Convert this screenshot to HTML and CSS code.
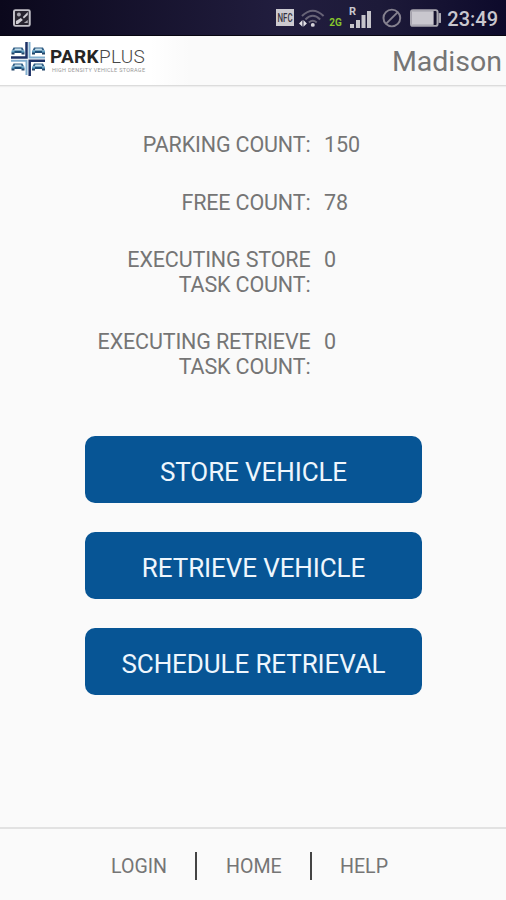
FILE: index.html
```html
<!DOCTYPE html>
<html lang="en">
<head>
<meta charset="utf-8">
<title>ParkPlus</title>
<link rel="stylesheet" href="styles.css">
</head>
<body>
<div class="status">
  <svg class="shot" width="18" height="18" viewBox="0 0 18 18"><rect x="1" y="1" width="16" height="16" rx="1.5" fill="#28242f" stroke="#c3c1c8" stroke-width="2"/><circle cx="6" cy="5.500" r="2" fill="#aaa8b0"/><path d="M3 15V12L8 9L10 11L5 15zM10 8L15 3V6L11 9.500z" fill="#d0ced4"/><path d="M11 14h4v-3z" fill="#aaa8b0"/></svg>
  <span class="nfc"><svg width="18" height="17" viewBox="0 0 18 17"><rect width="18" height="17" fill="#cccad0"/><text x="1.500" y="13" textLength="15" lengthAdjust="spacingAndGlyphs">NFC</text></svg></span>
  <svg class="wifi" width="27" height="20" viewBox="0 0 27 20"><g fill="none" stroke="#686477" stroke-width="2"><path d="M3 8Q14 -3 25 8"/><path d="M6.500 11.500Q14 4 21.500 11.500"/><path d="M10 14.500Q14 11 18 14.500"/></g><circle cx="14" cy="17" r="2" fill="#d5d3da"/><path d="M0 15.500L3.500 12v7zM8 15.500L4.500 12v7z" fill="#e3e1e7"/></svg>
  <span class="net">2G</span>
  <span class="signal"><svg width="23" height="22" viewBox="0 0 23 22"><path d="M1 17h4v4H1zM7 13h4v8H7zM12.500 8h4v13h-4zM18 4h4v17h-4z" fill="#c6c4cb"/></svg><b>R</b></span>
  <svg class="block" width="20" height="20" viewBox="0 0 20 20"><circle cx="10" cy="10" r="8.500" fill="none" stroke="#85818f" stroke-width="2"/><path d="M4 16L16 4" stroke="#85818f" stroke-width="2"/></svg>
  <svg class="battery" width="32" height="18" viewBox="0 0 32 18"><rect x="1" y="1" width="27" height="16" rx="2" fill="#15122d" stroke="#aaa8b1" stroke-width="2"/><rect x="2" y="2" width="22" height="14" fill="#c9c7ce"/><path d="M29 4h3v10h-3z" fill="#aaa8b1"/></svg>
  <span class="clock">23:49</span>
</div>
<header class="header">
  <div class="brand">
    <svg class="mark" width="35" height="35" viewBox="0 0 35 35">
      <defs><g id="car"><path d="M2 0h9l1.500 3H.5z" fill="#315f86"/><path d="M3.500 1h6l.7 1.500H2.800z" fill="#c5e0ec"/><path d="M0 3h13v2.500H0z" fill="#5f9fc2"/><path d="M0 5h3v2H0zM10 5h3v2h-3z" fill="#24466b"/><path d="M3 3.500h7v2H3z" fill="#1d4d76"/></g></defs>
      <path d="M0 15.500H15.500V0" fill="none" stroke="#1c3166" stroke-width="2.500"/><path d="M34 15.500H18.500V0" fill="none" stroke="#82afd0" stroke-width="2"/><path d="M0 18.700H15.500V33" fill="none" stroke="#82afd0" stroke-width="2"/><path d="M34 18.700H18.700V34" fill="none" stroke="#1c3166" stroke-width="2.500"/>
      <use href="#car" x="0.500" y="5.500"/><use href="#car" x="21" y="5.500"/><use href="#car" x="0.500" y="21.500"/><use href="#car" x="21" y="21.500"/>
    </svg>
    <div class="words"><div class="name"><b>PARK</b><span>PLUS</span></div><div class="tag">HIGH DENSITY VEHICLE STORAGE</div></div>
  </div>
  <h1 class="site">Madison</h1>
</header>
<main class="main">
  <dl class="counts">
    <dt>PARKING COUNT:</dt><dd>150</dd>
    <dt>FREE COUNT:</dt><dd>78</dd>
    <dt>EXECUTING STORE<br>TASK COUNT:</dt><dd>0</dd>
    <dt>EXECUTING RETRIEVE<br>TASK COUNT:</dt><dd>0</dd>
  </dl>
  <div class="actions">
    <button>STORE VEHICLE</button>
    <button>RETRIEVE VEHICLE</button>
    <button>SCHEDULE RETRIEVAL</button>
  </div>
</main>
<nav class="footer"><a class="login">LOGIN</a><a class="home">HOME</a><a class="help">HELP</a></nav>
</body>
</html>
```
FILE: styles.css
```css
* { box-sizing: border-box; }
body { margin: 0; height: 900px; display: flex; flex-direction: column; overflow: hidden; background: #fafafa; color: #757575; font-family: Roboto, "Liberation Sans", sans-serif; }
.status { height: 36px; flex: none; display: flex; align-items: center; padding: 0 8px 0 13px; background: linear-gradient(90deg, #0b081c, #211d3e 55%, #1d1a39 75%, #0d0a2b); border-bottom: 1px solid #080611; color: #c9c7ce; }
.nfc { margin-left: 245px; width: 18px; height: 17px; }
.nfc svg { display: block; overflow: visible; }
.nfc text { font-size: 12px; font-weight: 500; fill: #383442; }
.wifi { margin-left: 5px; }
.net { margin: 10px 0 0 4px; width: 13px; color: #86c52c; font-size: 10px; font-weight: 700; }
.signal { position: relative; margin-left: 7px; width: 23px; height: 22px; }
.signal svg { display: block; }
.signal b { position: absolute; left: 0; top: -2px; font-size: 11px; line-height: 13px; }
.block { margin-left: 10px; }
.battery { margin-left: 8px; }
.clock { margin-left: 6px; padding-top: 2px; font-size: 20px; font-weight: 500; white-space: nowrap; }
.header { height: 50px; flex: none; display: flex; justify-content: space-between; align-items: center; padding: 0 4px 0 11px; background: linear-gradient(90deg, #fff 150px, #fafafa 190px); border-bottom: 1px solid #dcdcdc; box-shadow: 0 1px 1px #eee; }
.brand { display: flex; align-items: center; margin-top: -3px; }
.mark { display: block; }
.words { margin-left: 4px; width: 96px; padding-top: 2px; }
.name { font-size: 19px; line-height: 20px; color: #252525; white-space: nowrap; letter-spacing: .3px; }
.name span { font-weight: 300; color: #484848; }
.tag { padding-left: 2px; font-size: 5.5px; line-height: 6px; letter-spacing: .3px; color: #999; white-space: nowrap; }
.site { margin: 2px 0 0; font-size: 28.5px; font-weight: 400; }
.main { flex: 1; padding-top: 47px; }
.counts { margin: 0; display: grid; grid-template-columns: 310.500px 1fr; column-gap: 13.500px; row-gap: 33px; font-size: 21.5px; line-height: 24.6px; }
.counts dt { text-align: right; letter-spacing: -.15px; }
.counts dd { margin: 0; letter-spacing: -.1px; }
.actions { display: flex; flex-direction: column; align-items: center; gap: 29px; margin-top: 56.5px; }
.actions button { width: 337px; height: 67px; border: 0; border-radius: 10px; background: #075595; color: #eef6fd; font: 400 26px Roboto, sans-serif; letter-spacing: -.1px; padding: 4px 0 0 1px; }
.footer { height: 73px; flex: none; display: flex; align-items: center; padding: 3px 0 0 111px; border-top: 2px solid #e2e2e2; font-size: 19.6px; }
.footer a { height: 28px; line-height: 29px; }
.login { width: 86px; border-right: 2px solid #444; }
.home { width: 115px; padding-left: 29px; border-right: 2px solid #444; }
.help { padding-left: 28px; }
```
